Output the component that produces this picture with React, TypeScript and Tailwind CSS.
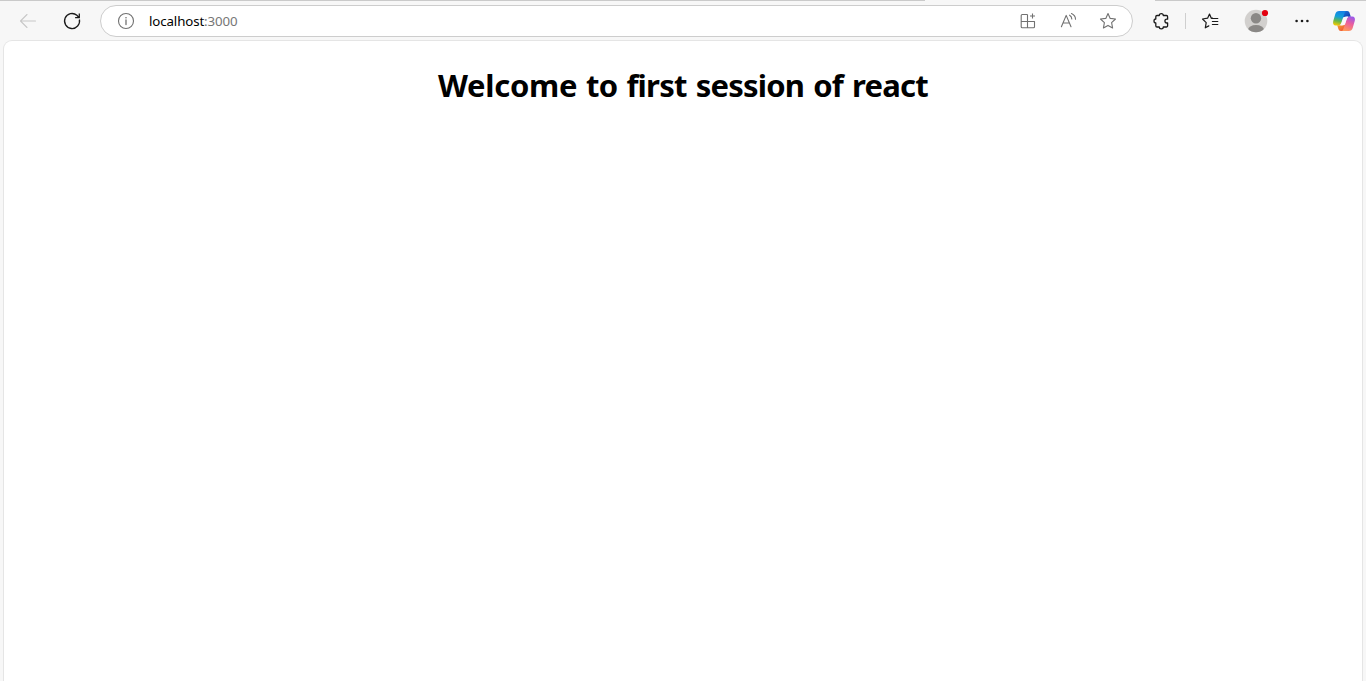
import type { ReactNode } from "react";

function Icon({ children, className = "" }: { children: ReactNode; className?: string }) {
  return (
    <svg
      viewBox="0 0 20 20"
      width="20"
      height="20"
      fill="none"
      stroke="currentColor"
      strokeWidth="1.1"
      strokeLinecap="round"
      strokeLinejoin="round"
      className={`block shrink-0 ${className}`}
    >
      {children}
    </svg>
  );
}

function AddressBar() {
  return (
    <div className="flex h-8 w-[1033px] shrink-0 items-center rounded-full border border-[#cdcdcd] bg-white pr-[14px] pl-[15px] text-[#717171]">
      <Icon>
        <circle cx="10" cy="10" r="7.5" />
        <path d="M10 9v4.5" strokeWidth="1.3" />
        <circle cx="10" cy="6.7" r=".8" fill="currentColor" stroke="none" />
      </Icon>
      <span className="ml-[13px] text-[13.3px] leading-5 tracking-[-0.12px] text-[#767676]">
        <span className="text-black">localhost</span>:3000
      </span>
      <div className="ml-auto flex gap-5">
        <Icon>
          <path d="M9.5 3.5H4.2a1 1 0 0 0-1 1v11.3a1 1 0 0 0 1 1h11.3a1 1 0 0 0 1-1v-5.3H3.2M9.5 3.5v13.3M14.5 2.5v5M12 5h5" strokeLinecap="butt" />
        </Icon>
        <Icon>
          <path d="M3.4 15.8 8.2 4.4 13 15.8M5 12h6.4" />
          <path d="M11.6 4.2c1.4.8 2.2 2.1 2.2 3.8M13.5 2.5c2.4 1.1 4 3.2 4 5.8" />
        </Icon>
        <Icon>
          <path d="m10 2.5 2.2 4.9 5.3.6-3.9 3.7 1 5.3L10 14.4 5.4 17l1-5.3L2.5 8l5.3-.6z" />
        </Icon>
      </div>
    </div>
  );
}

function Avatar() {
  return (
    <svg viewBox="0 0 26 26" width="26" height="26" className="ml-[23px] block shrink-0">
      <clipPath id="avatar-circle">
        <circle cx="13" cy="13" r="11.3" />
      </clipPath>
      <g clipPath="url(#avatar-circle)">
        <path fill="#d2d0ce" d="M0 0h26v26H0z" />
        <circle cx="13" cy="10.3" r="5.2" fill="#8a8886" />
        <ellipse cx="13" cy="22" rx="8" ry="5" fill="#8a8886" />
      </g>
      <circle cx="22" cy="5" r="3.1" fill="#e3000f" />
    </svg>
  );
}

function CopilotLogo() {
  return (
    <svg viewBox="0 0 24 24" width="24" height="24" className="ml-[20px] block shrink-0">
      <defs>
        <linearGradient id="cp-left" x1=".55" y1="0" x2=".35" y2="1">
          <stop offset="0" stopColor="#1480e6" />
          <stop offset=".4" stopColor="#12a0d8" />
          <stop offset=".7" stopColor="#67b64b" />
          <stop offset="1" stopColor="#f3c900" />
        </linearGradient>
        <linearGradient id="cp-right" x1=".7" y1="0" x2=".3" y2="1">
          <stop offset="0" stopColor="#9b58ea" />
          <stop offset=".45" stopColor="#ec5f9c" />
          <stop offset="1" stopColor="#ff9b5a" />
        </linearGradient>
        <linearGradient id="cp-top" x1="0" y1="0" x2="1" y2="1">
          <stop offset="0" stopColor="#197bdd" />
          <stop offset="1" stopColor="#1236ad" />
        </linearGradient>
        <linearGradient id="cp-bottom" x1="0" y1="0" x2="1" y2="1">
          <stop offset="0" stopColor="#f7a52c" />
          <stop offset="1" stopColor="#ed453b" />
        </linearGradient>
      </defs>
      <path fill="url(#cp-top)" d="M11 2h4.2c1.3 0 2 .7 2.4 1.9l1.2 3.8h-3.4c-1.2 0-2.2.3-3 .7L10 8z" />
      <path fill="url(#cp-bottom)" d="M13 22H8.8c-1.3 0-2-.7-2.4-1.9l-1.2-3.8h3.4c1.2 0 2.2-.3 3-.7l2.4.4z" />
      <path fill="url(#cp-left)" d="M7.2 2h7.1c-1.1.4-1.5 1.4-1.9 2.8l-2.9 8.4c-.8 2.3-1.8 3.3-3.6 3.3H3.8C1.5 16.5.6 14.8 1.2 12.3L3.3 5C3.9 3 5.1 2 7.2 2z" />
      <path fill="url(#cp-right)" d="M16.8 22H9.7c1.1-.4 1.5-1.4 1.9-2.8l2.9-8.4c.8-2.3 1.8-3.3 3.6-3.3h2.1c2.3 0 3.2 1.7 2.6 4.2L20.7 19c-.6 2-1.8 3-3.9 3z" />
      <path fill="#f9f8fb" d="M11.7 8.2c.7-.5 1.8-.7 3.6-.7h.9c-.9.8-1.3 1.8-1.8 3.3l-1.6 4.7c-.8.7-1.9 1-3.4 1H8.2c.9-.8 1.3-1.8 1.8-3.3z" />
    </svg>
  );
}

function Toolbar() {
  return (
    <header className="flex h-10 shrink-0 items-center pt-[2px] text-[#1a1a1a]">
      <Icon className="ml-[18px] text-[#c8c8c8]">
        <path d="M17.5 10H2.5M9 3.5 2.5 10 9 16.5" />
      </Icon>
      <Icon className="mr-[18px] ml-6">
        <path d="M17.4 8.5a7.5 7.5 0 1 1-2.5-4.2l1.8 1.9M17.3 2.5v4.2h-4.2" strokeWidth="1.3" strokeLinecap="butt" strokeLinejoin="miter" />
      </Icon>
      <AddressBar />
      <Icon className="ml-[18px]">
        <path d="M6 4.5h2.3c0-2.5 4-2.5 4 0h3.1a1.2 1.2 0 0 1 1.2 1.2v2.5h-.8c-2.5 0-2.5 3.8 0 3.8h.8v2.8a1.2 1.2 0 0 1-1.2 1.2h-3.1c0 2.5-4 2.5-4 0H6a1.2 1.2 0 0 1-1.2-1.2V12c-2.4 0-2.4-4 0-4V5.7A1.2 1.2 0 0 1 6 4.5z" strokeWidth="1.3" />
      </Icon>
      <div className="ml-[14px] h-4 w-px shrink-0 bg-[#cfcfcf]" />
      <Icon className="ml-[14px]">
        <path d="M12.5 7.2h-1.2L9.5 3 7.6 7.2 2.5 8l3.7 3.6-.9 5.2 3.5-1.9M11.8 7.5h6M12.4 10.5h5.4M12.4 13.5h5.4" strokeWidth="1.2" />
      </Icon>
      <Avatar />
      <Icon className="ml-[23px] fill-[#1a1a1a] stroke-none">
        <circle cx="4.6" cy="10" r="1.3" />
        <circle cx="10" cy="10" r="1.3" />
        <circle cx="15.4" cy="10" r="1.3" />
      </Icon>
      <CopilotLogo />
    </header>
  );
}

export default function App() {
  return (
    <div className="flex h-[681px] w-[1366px] flex-col overflow-hidden bg-[#f7f7f7] font-['Noto_Sans','Open_Sans',sans-serif]">
      <div className="flex h-px shrink-0 justify-between">
        <div className="w-[925px] bg-[#cacaca]" />
        <div className="w-[211px] bg-[#cacaca]" />
      </div>
      <div className="-mt-px flex min-h-0 grow flex-col">
        <Toolbar />
        <main className="mr-[3px] ml-[3px] grow rounded-t-[9px] border border-b-0 border-[#e5e5e5] bg-white pt-5 text-center">
          <h1 className="text-[31px] leading-[48px] font-bold tracking-[-0.77px] [word-spacing:1.7px] whitespace-nowrap text-black">
            <span className="tracking-[-0.3px]">Welcome</span> to first session of react
          </h1>
        </main>
      </div>
    </div>
  );
}
